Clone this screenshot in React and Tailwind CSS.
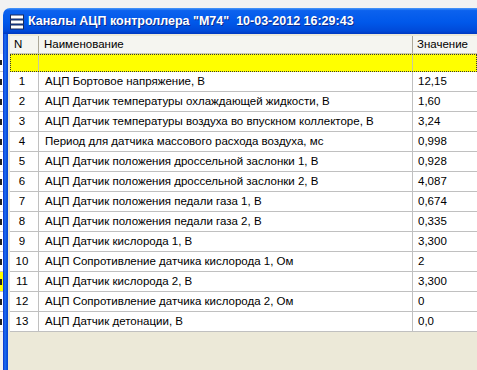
import React from 'react';

const rows = [
  ['1', 'АЦП Бортовое напряжение, В', '12,15'],
  ['2', 'АЦП Датчик температуры охлаждающей жидкости, В', '1,60'],
  ['3', 'АЦП Датчик температуры воздуха во впускном коллекторе, В', '3,24'],
  ['4', 'Период для датчика массового расхода воздуха, мс', '0,998'],
  ['5', 'АЦП Датчик положения дроссельной заслонки 1, В', '0,928'],
  ['6', 'АЦП Датчик положения дроссельной заслонки 2, В', '4,087'],
  ['7', 'АЦП Датчик положения педали газа 1, В', '0,674'],
  ['8', 'АЦП Датчик положения педали газа 2, В', '0,335'],
  ['9', 'АЦП Датчик кислорода 1, В', '3,300'],
  ['10', 'АЦП Сопротивление датчика кислорода 1, Ом', '2'],
  ['11', 'АЦП Датчик кислорода 2, В', '3,300'],
  ['12', 'АЦП Сопротивление датчика кислорода 2, Ом', '0'],
  ['13', 'АЦП Датчик детонации, В', '0,0'],
];

const MenuIcon = () => (
  <svg width="14" height="16" viewBox="0 0 14 16">
    {[1, 6, 11].map((y) => (
      <rect key={y} x="0.5" y={y} width="13" height="4" fill="#ffffff" stroke="#1b2a5a" strokeWidth="1" />
    ))}
  </svg>
);

export default function App() {
  return (
    <div
      className="flex h-[370px] w-[477px] overflow-hidden bg-[#f2f2f2] text-[11.5px] text-black"
      style={{ fontFamily: '"Liberation Sans", Arial, sans-serif' }}
    >
      {/* background window edge */}
      <div className="flex w-[3px] shrink-0 flex-col pt-[54px]">
        <div className="flex h-[18px] items-center border-b border-[#c8c8c8] bg-white"><div className="h-[5px] w-[2px] bg-[#222]" /></div>
        {rows.map((r) => (
          <div key={r[0]} className={`flex h-[20px] items-center border-b border-[#c8c8c8] ${r[0] === '11' ? 'bg-[#ffff00]' : 'bg-white'}`}>
            <div className="h-[6px] w-[2px] bg-[#222]" />
          </div>
        ))}
      </div>

      {/* window */}
      <div className="mt-[8px] flex min-w-0 flex-1 flex-col">
        <div className="flex h-[26px] shrink-0 items-center gap-[4px] rounded-tl-[7px] bg-[linear-gradient(to_bottom,#4a98fa_0%,#0c62ee_10%,#0058ea_55%,#004ad9_88%,#0038c0_100%)] pl-[7px] pt-[1px]">
          <MenuIcon />
          <span className="whitespace-pre text-[12.5px] font-bold text-white [text-shadow:1px_1px_0_#0a2a90]">
            Каналы АЦП контроллера "M74"  10-03-2012 16:29:43
          </span>
        </div>

        <div className="flex flex-1">
          <div className="w-[5px] shrink-0 bg-[linear-gradient(to_right,#0831c8,#1f6ef2_40%,#0a55e0_70%,#0840d0)]" />
          <div className="flex flex-1 flex-col bg-[#ece9d8] pl-[2px] pt-[2px]">
            {/* header */}
            <div className="flex h-[18px] shrink-0 border-b border-[#c7c5b2] bg-[#f5f5f0]">
              <div className="flex w-[29px] items-center border-r border-[#aca899] pl-[4px]">N</div>
              <div className="flex w-[374px] items-center border-r border-[#aca899] pl-[5px]">Наименование</div>
              <div className="flex flex-1 items-center pl-[4px]">Значение</div>
            </div>
            {/* selected empty row */}
            <div className="flex h-[18px] shrink-0 border border-dotted border-[#333] bg-[#ffff00]">
              <div className="w-[28px] border-r border-[#c8c8a0]" />
              <div className="w-[374px] border-r border-[#c8c8a0]" />
              <div className="flex-1" />
            </div>
            {rows.map(([n, name, val]) => (
              <div key={n} className="flex h-[20px] shrink-0 border-b border-[#c0c0c0] bg-white">
                <div className="flex w-[29px] items-center justify-center border-r border-[#c0c0c0] pr-[4px]">{n}</div>
                <div className="flex w-[374px] items-center whitespace-nowrap border-r border-[#c0c0c0] pl-[6px]">{name}</div>
                <div className="flex flex-1 items-center pl-[5px]">{val}</div>
              </div>
            ))}
          </div>
        </div>
      </div>
    </div>
  );
}
